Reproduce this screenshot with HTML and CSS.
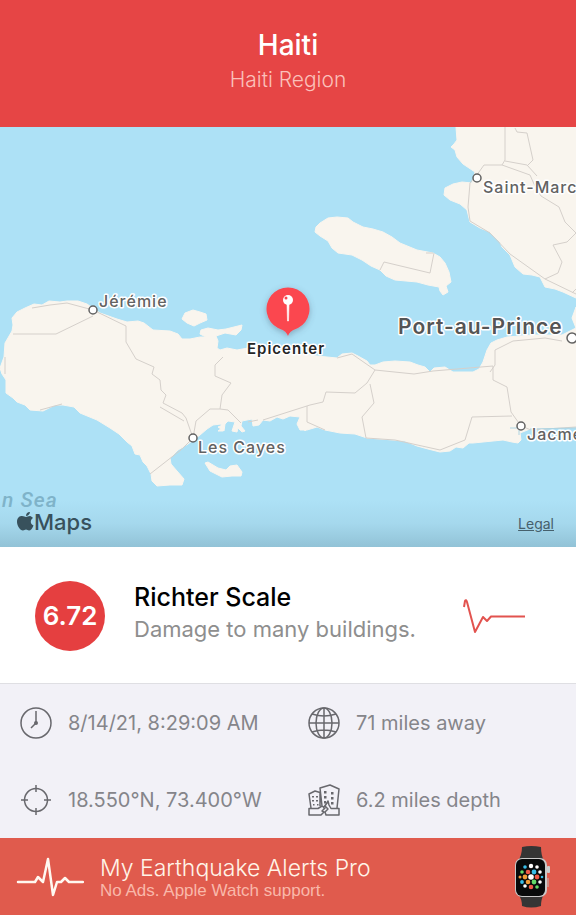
FILE: index.html
```html
<!DOCTYPE html>
<html lang="en">
<head>
<meta charset="utf-8">
<meta name="viewport" content="width=device-width, initial-scale=1">
<title>Haiti</title>
<link rel="stylesheet" href="styles.css">
</head>
<body>
<header class="header">
  <h1 class="header-title">Haiti</h1>
  <p class="header-region">Haiti Region</p>
</header>

<main>
  <section class="map" aria-label="Map">
    <svg class="map-canvas" viewBox="0 127 576 420">
      <defs>
        <linearGradient id="fade" x1="0" y1="0" x2="0" y2="1">
          <stop offset="0" stop-color="#5d8799" stop-opacity="0"/>
          <stop offset=".5" stop-color="#5d8799" stop-opacity=".1"/>
          <stop offset="1" stop-color="#5d8799" stop-opacity=".34"/>
        </linearGradient>
        <filter id="pin-shadow" x="-30%" y="-30%" width="160%" height="160%">
          <feDropShadow dx="0" dy="2" stdDeviation="3" flood-color="#456" flood-opacity=".4"/>
        </filter>
      </defs>
      <g class="land">
        <path d="M456 127L457 140L454 144L451 147L455 150L457 157L463 164L475 172L472 183L462 182L453 184L445 188L444 195L450 200L460 204L467 210L470 222L480 228L490 232L500 242L502 247L510 255L515 267L523 274L532 275L540 277L545 287L555 289L563 292L576 298V127Z"/>
        <path d="M315 232L316 227L320 223L328 218L337 217L348 218L353 222L363 227L373 229L383 232L392 237L400 243L417 250L433 253L440 257L445 263L449 272L451 282L446 286L448 292L443 295L440 291L439 287L428 285L417 282L395 280L386 276L380 270L371 266L362 260L352 255L338 253L332 248L328 241L320 236Z"/>
        <path d="M182 319L185 313L193 310L200 312L206 314L207 320L200 323L194 326L187 323Z"/>
        <path d="M6 393L6 380L2 374L0 368L4 357L5 343L12 331L13 325L12 318L17 312L25 308L34 304L42 305L49 301L60 302L67 301L78 301L87 304L94 309L100 313L117 319L127 322L138 321L144 323L153 330L170 331L178 334L182 339L190 339L200 337L206 337L200 334L201 330L208 328L218 330L226 329L242 325L241 330L236 335L225 333L216 336L218 341L217 348L220 350L227 348L237 350L248 348L280 352L317 356L337 358L342 354L352 353L358 356L367 361L370 365L375 365L383 362L395 361L410 362L418 365L425 367L430 372L434 368L445 367L453 372L473 372L479 369L483 362L487 350L491 343L497 340L507 337L533 335L562 335L576 328L572 318L576 307V427L530 429L520 433L521 440L518 443L512 442L503 440L473 443L469 443L463 448L456 447L450 451L440 452L428 449L417 446L405 441L393 440L367 438L355 434L340 433L325 430L317 427L307 430L300 430L297 424L300 417L290 416L283 419L277 417L270 421L263 420L259 425L253 426L252 419L242 421L241 426L245 431L242 432L238 428L237 432L232 431L235 422L228 421L224 425L223 431L218 431L222 428L221 424L213 425L207 429L200 435L188 444L178 450L170 458L171 464L177 471L184 479L182 485L170 485L157 486L152 481L151 474L147 466L143 462L140 455L135 454L132 446L127 442L119 434L110 428L97 420L80 413L74 407L63 405L55 405L43 411L30 410L25 405L17 402L13 398Z"/>
        <path d="M205 463L208 462L218 468L226 470L230 466L237 465L242 472L241 476L232 476L222 477L216 474L210 471Z"/>
        <path d="M303 427h6l-4 4zM218 427l7-3-1 7zM252 344l8 2-5 5z"/>
      </g>
      <g class="roads">
        <path d="M32 308L50 305L67 303L93 310L126 326V342L136 359L154 367L152 374L160 380L161 390L166 395L163 403L182 413L186 418L193 438L182 449L150 474M93 316L56 334H13M5 357V374M40 410L62 404"/>
        <path d="M223 357L215 365V376L231 383L222 395L220 409L228 410L241 423M160 407L184 421M193 438L196 421L210 409H220M263 420L310 405L323 402L326 392L355 393L367 383L375 370M307 406V422L325 430M370 384L374 403L362 417L366 438L395 440L440 450L465 440L472 417L512 416"/>
        <path d="M337 358L352 354L375 370L414 374L433 371L493 366M490 372L495 365V350L513 341L545 338L562 341M493 366V380L507 387L511 412L521 426L531 430L576 427M248 422L258 420"/>
        <path d="M505 127V160L502 165L484 165L479 172L470 183L468 207L470 221L490 233L510 254L545 279L576 294M505 161L527 165L537 176M515 128L517 132L527 133L533 160L528 165M502 165L530 175L534 184L541 196L559 207L565 222L576 233L567 242L553 245L562 262L558 273L545 279M572 293L576 289"/>
        <path d="M434 253L430 273L384 262L380 270M433 253h-7"/>
      </g>
      <path d="M510 428H519V435M530 429L576 428" fill="none" stroke="#aed4e2"/>
      <rect y="500" width="576" height="47" fill="url(#fade)"/>
      <g class="towns">
        <circle cx="477" cy="178" r="4"/>
        <circle cx="93" cy="310" r="4"/>
        <circle cx="193" cy="438" r="4"/>
        <circle cx="521" cy="426" r="4"/>
        <circle cx="572" cy="338" r="5"/>
      </g>
      <g class="labels">
        <text x="483" y="193">Saint-Marc</text>
        <text x="99" y="307">Jérémie</text>
        <text x="198" y="453">Les Cayes</text>
        <text x="527" y="440">Jacme</text>
        <text class="label-city" x="398" y="334">Port-au-Prince</text>
        <text class="label-sea" x="2" y="507">n Sea</text>
        <text class="label-epicenter" x="247" y="354">Epicenter</text>
      </g>
      <g filter="url(#pin-shadow)">
        <path fill="#fb4650" d="M288 336C286 331 283 330 278 328A21.500 21.500 0 1 1 298 328C293 330 290 331 288 336Z"/>
      </g>
      <circle cx="288" cy="300" r="5" fill="#fff"/>
      <circle cx="286" cy="298" r="1.500" fill="#fb4650"/>
      <path d="M287 304H289L288.500 321H287.500Z" fill="#fff" stroke="#fff" stroke-width=".6"/>
      <g class="brand">
        <path d="M30 512c-3 0-4 2-4 4 2 0 4-2 4-4zM17 522c0-5 3-6 5-6 2 0 3 1 4 1s2-1 4-1c1 0 2 1 3 2-3 2-3 6 .5 7.500-1 3-3 5-4.500 5-1 0-2-1-3-1s-2 1-3 1c-3 0-6-5-6-8.500z"/>
        <text x="34" y="530">Maps</text>
      </g>
    </svg>
    <a class="legal" href="#legal">Legal</a>
  </section>

  <section class="scale">
    <div class="magnitude">6.72</div>
    <div class="scale-text">
      <h2 class="scale-title">Richter Scale</h2>
      <p class="scale-note">Damage to many buildings.</p>
    </div>
    <svg class="wave" viewBox="0 0 62 40" aria-hidden="true">
      <path d="M1 11L2 5Q3 3 4 6L12 36L20 21L24 25L28 20.500H62"/>
    </svg>
  </section>

  <ul class="details">
    <li class="detail">
      <svg class="icon" viewBox="0 0 32 32" aria-hidden="true">
        <circle cx="16" cy="16" r="15"/><path d="M16 4V16L11 21"/><circle class="solid" cx="16" cy="16" r="2"/>
      </svg>
      <span>8/14/21, 8:29:09 AM</span>
    </li>
    <li class="detail">
      <svg class="icon" viewBox="0 0 32 32" aria-hidden="true">
        <circle cx="16" cy="16" r="15"/><ellipse cx="16" cy="16" rx="8" ry="15"/><path d="M16 1V31M1 16H31M4 7Q16 11 28 7M4 25Q16 21 28 25"/>
      </svg>
      <span>71 miles away</span>
    </li>
    <li class="detail">
      <svg class="icon" viewBox="0 0 32 32" aria-hidden="true">
        <circle cx="16" cy="16" r="11.500"/><path d="M16 1V8M16 24V31M1 16H8M24 16H31"/>
      </svg>
      <span>18.550°N, 73.400°W</span>
    </li>
    <li class="detail">
      <svg class="icon" viewBox="0 0 32 32" aria-hidden="true">
        <path d="M3 24L1 10L7 7L12 8.500M14 22L12 4L22 1L31 5L29 24M12 8V22M1 24.500H10L14 22L17 24L14 27L16 28L13 31H1ZM20 17L17 22L20 25L17 28L18 31H31V24.500H23L21 21ZM19 19L15 24"/>
        <path class="solid" d="M16 7h2.500v2.500h-2.500zM23 8h2.500v2.500h-2.500zM16 12h2.500v2.500h-2.500zM23 13h2.500v2.500h-2.500zM16 17h2v2.500h-2zM23 18h2.500v2.500h-2.500zM4 12h2v1.500h-2zM8 12h2v1.500h-2zM4 16h2v1.500h-2zM8 16h2v1.500h-2zM5 20h1.500v1.500h-1.500zM9 20h1.500v1.500h-1.500z"/>
      </svg>
      <span>6.2 miles depth</span>
    </li>
  </ul>
</main>

<a class="promo" href="#pro">
  <svg class="pulse" viewBox="0 0 68 42" aria-hidden="true">
    <path d="M2 26H19L22 21L27 26L32 3L37 39L41 26H45L49 22L53 26H67"/>
  </svg>
  <span class="promo-text">
    <span class="promo-title">My Earthquake Alerts Pro</span>
    <span class="promo-note">No Ads. Apple Watch support.</span>
  </span>
  <svg class="watch" viewBox="0 0 36 64" aria-hidden="true">
    <path fill="#353535" d="M8 2Q17 0 27 2Q27 10 30 16V49Q27 54 27 61Q17 64 8 61Q8 54 4 49V16Q8 10 8 2Z"/>
    <rect x="1" y="13" width="32" height="39" rx="7" fill="#c8c8c8"/>
    <rect x="33" y="21" width="3" height="7" rx="1" fill="#ccc"/>
    <path d="M34 33V42" stroke="#bbb"/>
    <rect x="2" y="14" width="29" height="37" rx="6" fill="#080a0b"/>
    <g fill="#fff"><circle cx="17" cy="32" r="2.800"/><circle cx="17" cy="21" r="2.200"/><circle cx="23" cy="22" r="1.800"/><circle cx="26" cy="27" r="1.800"/><circle cx="11" cy="41" r="1.800"/><circle cx="26" cy="37" r="1.800"/></g>
    <g fill="#ef5946"><circle cx="14" cy="27" r="2.300"/><circle cx="23" cy="32" r="2.400"/><circle cx="17" cy="42" r="2.300"/></g>
    <g fill="#f39c37"><circle cx="11" cy="32" r="2.400"/><circle cx="14" cy="37" r="2.300"/><circle cx="6" cy="32" r="1.500"/></g>
    <g fill="#38bde8"><circle cx="20" cy="27" r="2.400"/><circle cx="11" cy="22" r="1.800"/><circle cx="8" cy="37" r="1.900"/><circle cx="28" cy="32" r="1.300"/></g>
    <g fill="#65da68"><circle cx="20" cy="37" r="2.400"/><circle cx="8" cy="27" r="1.800"/><circle cx="23" cy="42" r="1.800"/></g>
  </svg>
</a>
</body>
</html>
```
FILE: styles.css
```css
* {
  box-sizing: border-box;
  margin: 0;
  padding: 0;
}

body {
  min-height: 100vh;
  display: flex;
  flex-direction: column;
  background: #f2f1f7;
  font-family: Inter, "Liberation Sans", sans-serif;
  color: #000;
}

.header {
  padding: 27px 16px 31px;
  background: #e64545;
  color: #fff;
  text-align: center;
}

.header-title {
  font-size: 28px;
  font-weight: 500;
  line-height: 36px;
}

.header-region {
  padding-top: 1px;
  font-size: 21px;
  font-weight: 300;
  line-height: 32px;
  color: #fbc0ba;
}

.map {
  position: relative;
  background: #ade1f6;
}

.map-canvas {
  display: block;
  width: 100%;
}

.land {
  fill: #f9f5ee;
  stroke: #f9f5ee;
  stroke-width: 1;
  stroke-linejoin: round;
}

.roads {
  fill: none;
  stroke: #d5d0cb;
  stroke-linejoin: round;
}

.towns {
  fill: #fff;
  stroke: #626262;
  stroke-width: 1.5;
}

.labels {
  font-size: 16px;
  font-weight: 500;
  letter-spacing: 1px;
  fill: #626262;
  stroke: #fff;
  stroke-width: 3px;
  stroke-linejoin: round;
  paint-order: stroke;
}

.label-city {
  font-size: 21px;
  font-weight: 600;
  fill: #555;
}

.label-sea {
  font-family: Roboto, "Liberation Sans", sans-serif;
  font-size: 21px;
  font-style: italic;
  fill: #7fb3c9;
  stroke: none;
}

.label-epicenter {
  font-size: 15px;
  font-weight: 600;
  fill: #252525;
}

.brand {
  font-size: 22px;
  font-weight: 500;
  fill: #38515c;
}

.legal {
  position: absolute;
  right: 22px;
  bottom: 13px;
  font-size: 14px;
  line-height: 20px;
  color: #46606c;
}

.scale {
  display: flex;
  align-items: center;
  padding: 34px 51px 32px 35px;
  border-bottom: 1px solid #dfdfe3;
  background: #fff;
}

.magnitude {
  flex: none;
  width: 70px;
  height: 70px;
  border-radius: 50%;
  background: #e53f40;
  color: #fff;
  font-size: 26px;
  font-weight: 600;
  line-height: 70px;
  text-align: center;
}

.scale-text {
  flex: 1;
  padding: 0 0 6px 29px;
}

.scale-title {
  font-size: 25px;
  font-weight: 500;
  line-height: 32px;
}

.scale-note {
  font-size: 22px;
  line-height: 32px;
  color: #8e8e8e;
}

.wave {
  flex: none;
  width: 62px;
  height: 40px;
  fill: none;
  stroke: #e2534f;
  stroke-width: 2;
  stroke-linejoin: round;
}

.details {
  display: grid;
  grid-template-columns: 1fr 1fr;
  row-gap: 45px;
  padding: 23px 0 22px;
  list-style: none;
}

.detail {
  display: flex;
  align-items: center;
  gap: 16px;
  height: 32px;
  padding-left: 20px;
  font-size: 20px;
  color: #85858a;
  white-space: nowrap;
}

.icon {
  flex: none;
  width: 32px;
  height: 32px;
  fill: none;
  stroke: #68686d;
  stroke-width: 1.5;
  stroke-linejoin: round;
}

.icon .solid {
  fill: #68686d;
  stroke: none;
}

.promo {
  display: flex;
  flex: 1;
  align-items: center;
  min-height: 77px;
  padding: 6px 26px 6px 16px;
  background: #e05b4d;
  color: #fff4e8;
  text-decoration: none;
}

.pulse {
  flex: none;
  width: 68px;
  height: 42px;
  fill: none;
  stroke: #fff8f0;
  stroke-width: 2.5;
  stroke-linecap: round;
  stroke-linejoin: round;
}

.promo-text {
  flex: 1;
  padding: 0 0 0 16px;
}

.promo-title,
.promo-note {
  display: block;
}

.promo-title {
  font-size: 23px;
  font-weight: 300;
  line-height: 28px;
}

.promo-note {
  font-family: "Liberation Sans", sans-serif;
  font-size: 17px;
  line-height: 18px;
  color: #f9b8aa;
}

.watch {
  flex: none;
  width: 36px;
  height: 64px;
}
```
